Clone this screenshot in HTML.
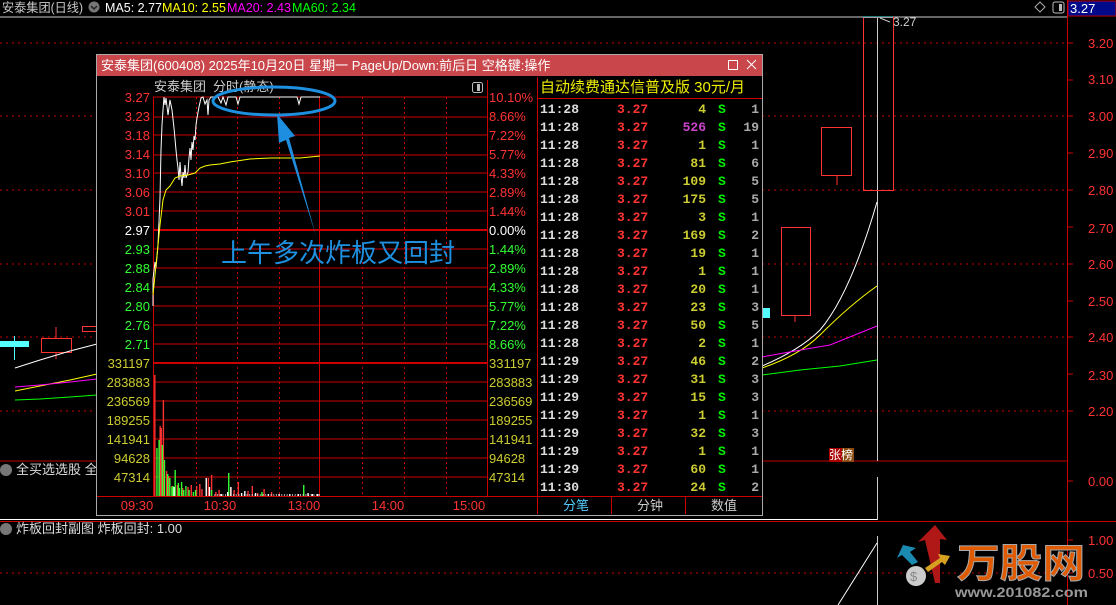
<!DOCTYPE html>
<html><head><meta charset="utf-8"><style>
html,body{margin:0;padding:0;background:#000;width:1116px;height:605px;overflow:hidden}
svg{display:block;font-family:"Liberation Sans","Noto Sans CJK SC",sans-serif}
.m{font-family:"Liberation Mono","DejaVu Sans Mono",monospace;font-weight:bold}
</style></head><body>
<svg width="1116" height="605" viewBox="0 0 1116 605" font-size="12">
<!-- top header -->
<text x="2" y="12" fill="#c8c8c8" font-size="12.5" textLength="81" lengthAdjust="spacingAndGlyphs">安泰集团(日线)</text>
<circle cx="94" cy="7" r="5.5" fill="#777"/><path d="M91 6l3 3 3-3" stroke="#222" stroke-width="1.5" fill="none"/>
<text x="105" y="12" fill="#fff" font-size="12.5">MA5: 2.77</text>
<text x="162" y="12" fill="#ff0" font-size="12.5">MA10: 2.55</text>
<text x="227" y="12" fill="#f0f" font-size="12.5">MA20: 2.43</text>
<text x="292" y="12" fill="#0f0" font-size="12.5">MA60: 2.34</text>
<path d="M1040 2l5 5-5 5-5-5z" stroke="#aaa" fill="none"/>
<rect x="1053" y="2" width="11" height="11" rx="2" stroke="#bbb" fill="none"/><rect x="1059" y="4" width="3" height="7" fill="#bbb"/>
<rect x="1068" y="1" width="48" height="15" fill="#000a8a" stroke="#b00"/>
<text x="1070" y="13" fill="#fff" font-size="13">3.27</text>
<line x1="0" y1="17" x2="1067" y2="17" stroke="#ccc"/>
<!-- right axis -->
<line x1="1067.5" y1="0" x2="1067.5" y2="605" stroke="#c00"/>
<g fill="#f33" font-size="13">
<text x="1088" y="48">3.20</text><text x="1088" y="84">3.10</text><text x="1088" y="121">3.00</text><text x="1088" y="158">2.90</text><text x="1088" y="195">2.80</text><text x="1088" y="233">2.70</text><text x="1088" y="269">2.60</text><text x="1088" y="306">2.50</text><text x="1088" y="342">2.40</text><text x="1088" y="380">2.30</text><text x="1088" y="416">2.20</text><text x="1088" y="486">0.00</text><text x="1088" y="545">1.00</text><text x="1088" y="578">0.50</text>
</g>
<g stroke="#c00">
<path d="M1068 43h5M1068 80h5M1068 116h5M1068 153h5M1068 190h5M1068 227h5M1068 264h5M1068 301h5M1068 337h5M1068 374h5M1068 411h5M1068 481h5M1068 540h5M1068 573h5"/>
</g>
<g stroke="#c00" stroke-dasharray="2 4">
<path d="M0 43h1067M0 116h1067M0 190h1067M0 264h1067M0 337h1067M0 411h1067M0 573h1067"/>
</g>
<line x1="0" y1="461" x2="1067" y2="461" stroke="#b00"/>
<line x1="0" y1="519.5" x2="877" y2="519.5" stroke="#fff"/>
<line x1="0" y1="521.5" x2="1116" y2="521.5" stroke="#c00"/>
<!-- labels -->
<circle cx="6" cy="470" r="6" fill="#777"/><text x="16" y="474" fill="#ddd" font-size="13">全买选选股 全</text>
<circle cx="6" cy="529" r="6" fill="#777"/><text x="16" y="533" fill="#ddd" font-size="13">炸板回封副图 炸板回封: 1.00</text>
<!-- left candles -->
<rect x="0" y="341" width="29" height="6" fill="#5ff"/><line x1="14.5" y1="336" x2="14.5" y2="360" stroke="#5ff"/>
<rect x="41.5" y="338.5" width="30" height="14" stroke="#f33" fill="none"/><line x1="56" y1="327" x2="56" y2="338" stroke="#f33"/><line x1="56" y1="353" x2="56" y2="359" stroke="#f33"/>
<rect x="82.5" y="326.5" width="15" height="5" stroke="#f33" fill="none"/>
<polyline points="15,368 40,360 70,351 97,344" stroke="#fff" fill="none"/>
<polyline points="15,391 40,386 70,380 97,374" stroke="#ff0" fill="none"/>
<polyline points="15,387 40,385 70,382 97,379" stroke="#f0f" fill="none"/>
<polyline points="15,400 40,399 70,397 97,395" stroke="#0f0" fill="none"/>
<!-- right candles -->
<line x1="877.5" y1="17" x2="877.5" y2="461" stroke="#ccc"/><line x1="877.5" y1="477" x2="877.5" y2="520" stroke="#ccc"/><line x1="877.5" y1="536" x2="877.5" y2="605" stroke="#ccc"/>
<rect x="762" y="308" width="8" height="10" fill="#5ff"/>
<rect x="781.5" y="227.5" width="29" height="88" stroke="#f33" fill="none"/><line x1="795" y1="316" x2="795" y2="322" stroke="#f33"/>
<rect x="821.5" y="127.5" width="30" height="48" stroke="#f33" fill="none"/><line x1="837" y1="176" x2="837" y2="185" stroke="#f33"/>
<rect x="863.5" y="17.5" width="30" height="173" stroke="#f33" fill="none"/>
<line x1="863" y1="17" x2="893" y2="17" stroke="#5ff"/>
<path d="M880 18l10 4" stroke="#ccc"/><text x="893" y="26" fill="#ccc" font-size="12">3.27</text>
<path d="M762 366 Q800 350 820 330 Q850 295 877 202" stroke="#fff" fill="none"/>
<path d="M762 368 Q800 355 820 335 Q850 305 877 286" stroke="#ff0" fill="none"/>
<path d="M762 357 Q800 350 830 345 L877 326" stroke="#f0f" fill="none"/>
<path d="M762 375 L800 370 L840 366 L877 360" stroke="#0f0" fill="none"/>
<rect x="829" y="448" width="13" height="14" fill="#a00"/><rect x="842" y="448" width="12" height="14" fill="#8a4a10"/>
<text x="829" y="459" fill="#fff" font-size="12">张榜</text>
<line x1="838" y1="605" x2="877" y2="543" stroke="#fff"/>
<!-- logo -->
<path d="M935 583 L925 540 L918 542 L935 525 L947 540 L940 539 L940 583z" fill="#b01818"/>
<path d="M912 565 L902 555 L897 558 L903 545 L916 548 L910 552 L918 562z" fill="#1a8ab0"/>
<path d="M925 568 L940 558 L938 554 L950 556 L945 565 L942 562 L928 572z" fill="#d8a020"/>
<circle cx="916" cy="576" r="10" fill="#ccc"/><text x="910" y="581" fill="#888" font-size="13">$</text>
<text x="957" y="577" fill="#e05a00" stroke="#aaa" stroke-width="1" font-size="40" font-weight="bold" textLength="128" lengthAdjust="spacingAndGlyphs">万股网</text>
<text x="955" y="597" fill="#999" font-size="14" font-weight="bold" textLength="133" lengthAdjust="spacingAndGlyphs">www.201082.com</text>

<!-- popup -->
<rect x="96.5" y="54.5" width="666" height="461" fill="#000" stroke="#aaa"/>
<rect x="97" y="55" width="665" height="21" fill="#c9464b"/>
<text x="101" y="70" fill="#fff" font-size="13">安泰集团(600408) 2025年10月20日 星期一 PageUp/Down:前后日 空格键:操作</text>
<rect x="728.5" y="60.5" width="9" height="9" stroke="#fff" fill="none"/>
<path d="M747 60l9 9M756 60l-9 9" stroke="#fff"/>
<text x="154" y="91" fill="#ccc" font-size="13">安泰集团</text>
<text x="213" y="91" fill="#ccc" font-size="13">分时(静态)</text>
<rect x="472.5" y="82.5" width="10" height="10" rx="2" stroke="#bbb" fill="none"/><rect x="477" y="84" width="3" height="7" fill="#bbb"/>
<!-- grid -->
<g stroke="#c00">
<path d="M153 97h334M153 117h334M153 135h334M153 155h334M153 173h334M153 192h334M153 211h334M153 249h334M153 268h334M153 287h334M153 306h334M153 325h334M153 344h334M153 382h334M153 401h334M153 420h334M153 439h334M153 458h334M153 477h334"/>
<path d="M153.5 97v399M319.5 97v399M487.5 80v416M537.5 77v437" />
</g>
<path d="M153 230h334M153 363h334" stroke="#c00" stroke-width="2"/>
<path d="M97 496.5h665" stroke="#c00"/>
<g stroke="#c00" stroke-dasharray="2 3">
<path d="M196.5 97v399M237.5 97v399M279.5 97v399M362.5 97v399M404.5 97v399M446.5 97v399"/>
</g>
<g font-size="13" text-anchor="end">
<g fill="#f33"><text x="150" y="102">3.27</text><text x="150" y="121">3.23</text><text x="150" y="140">3.18</text><text x="150" y="159">3.14</text><text x="150" y="178">3.10</text><text x="150" y="197">3.06</text><text x="150" y="216">3.01</text></g>
<text x="150" y="235" fill="#fff">2.97</text>
<g fill="#3f3"><text x="150" y="254">2.93</text><text x="150" y="273">2.88</text><text x="150" y="292">2.84</text><text x="150" y="311">2.80</text><text x="150" y="330">2.76</text><text x="150" y="349">2.71</text></g>
<g fill="#cc3"><text x="150" y="368">331197</text><text x="150" y="387">283883</text><text x="150" y="406">236569</text><text x="150" y="425">189255</text><text x="150" y="444">141941</text><text x="150" y="463">94628</text><text x="150" y="482">47314</text></g>
</g>
<g font-size="13">
<g fill="#f33"><text x="489" y="102">10.10%</text><text x="489" y="121">8.66%</text><text x="489" y="140">7.22%</text><text x="489" y="159">5.77%</text><text x="489" y="178">4.33%</text><text x="489" y="197">2.89%</text><text x="489" y="216">1.44%</text></g>
<text x="489" y="235" fill="#fff">0.00%</text>
<g fill="#3f3"><text x="489" y="254">1.44%</text><text x="489" y="273">2.89%</text><text x="489" y="292">4.33%</text><text x="489" y="311">5.77%</text><text x="489" y="330">7.22%</text><text x="489" y="349">8.66%</text></g>
<g fill="#cc3"><text x="489" y="368">331197</text><text x="489" y="387">283883</text><text x="489" y="406">236569</text><text x="489" y="425">189255</text><text x="489" y="444">141941</text><text x="489" y="463">94628</text><text x="489" y="482">47314</text></g>
</g>
<g fill="#f33" font-size="13" text-anchor="middle"><text x="137" y="510">09:30</text><text x="220" y="510">10:30</text><text x="304" y="510">13:00</text><text x="388" y="510">14:00</text><text x="469" y="510">15:00</text></g>
<!-- price line -->
<polyline fill="none" stroke="#fff" points="153,306 153,279 155,262 156,268 158,245 160,198 161,150 162,125 163,110 164,97 165,105 166,98 168,115 170,100 172,110 174,128 176,150 177,160 178,168 179,180 180,162 181,176 182,186 183,172 184,178 185,165 186,178 188,172 189,158 190,148 191,160 192,142 193,150 194,136 195,140 196,125 197,118 199,107 201,98 203,97 205,104 207,100 208,115 209,100 211,97 218,97 221,103 223,97 226,105 228,97 236,97 238,104 240,97 297,97 299,104 301,97 320,97"/>
<polyline fill="none" stroke="#ff0" points="153,295 154,285 156,265 158,245 160,225 163,200 166,190 170,186 175,178 180,176 188,175 195,173 200,168 205,166 210,165 220,164 230,162 250,159 270,158 300,158 310,157 320,156"/>
<!-- volume -->
<g stroke-width="1.3" transform="matrix(1.0714 0 0 1 0 0)">
<path stroke="#f33" d="M144.5 496V375M149.5 496V426M150.5 496V428M152.5 496V400M155.5 496V471M157.5 496V476M160.5 496V486M165.5 496V485M170.5 496V488M175.5 496V487M178.5 496V485M183.5 496V486M186.5 496V484M188.5 496V489M194.5 496V478M197.5 496V475M201.5 496V492M204.5 496V490M215.5 496V487M218.5 496V490M222.5 496V482M231.5 496V491M235.5 496V486M240.5 496V493M246.5 496V489M253.5 496V492M283.5 496V491"/>
<path stroke="#3f3" d="M146.5 496V448M148.5 496V440M151.5 496V445M153.5 496V460M156.5 496V474M158.5 496V478M160.5 496V487M161.5 496V486M163.5 496V470M166.5 496V483M167.5 496V488M169.5 496V482M171.5 496V490M173.5 496V486M176.5 496V490M180.5 496V492M182.5 496V490M197.5 496V490M213.5 496V473M244.5 496V492M283.5 496V485"/>
<path stroke="#fff" d="M162.5 496V487M192.5 496V478M195.5 496V487M206.5 496V494M212.5 496V492M215.5 496V487M225.5 496V493M228.5 496V491M238.5 496V493M250.5 496V494M260.5 496V494M270.5 496V494M278.5 496V494M287.5 496V493M291.5 496V494M296.5 496V494"/>
<path stroke="#fff" d="M200 495h100" stroke-dasharray="1 1.5"/>
</g>
<!-- table -->
<text x="540" y="92" fill="#ee0" font-size="15">自动续费通达信普及版  30元/月</text>
<line x1="537" y1="98.5" x2="762" y2="98.5" stroke="#c00"/>
<g class="m" font-size="13">
<g fill="#ddd"><text x="540" y="113">11:28</text><text x="540" y="131">11:28</text><text x="540" y="149">11:28</text><text x="540" y="167">11:28</text><text x="540" y="185">11:28</text><text x="540" y="203">11:28</text><text x="540" y="221">11:28</text><text x="540" y="239">11:28</text><text x="540" y="257">11:28</text><text x="540" y="275">11:28</text><text x="540" y="293">11:28</text><text x="540" y="311">11:28</text><text x="540" y="329">11:28</text><text x="540" y="347">11:28</text><text x="540" y="365">11:29</text><text x="540" y="383">11:29</text><text x="540" y="401">11:29</text><text x="540" y="419">11:29</text><text x="540" y="437">11:29</text><text x="540" y="455">11:29</text><text x="540" y="473">11:29</text><text x="540" y="491">11:30</text></g>
<g fill="#f33"><text x="617" y="113">3.27</text><text x="617" y="131">3.27</text><text x="617" y="149">3.27</text><text x="617" y="167">3.27</text><text x="617" y="185">3.27</text><text x="617" y="203">3.27</text><text x="617" y="221">3.27</text><text x="617" y="239">3.27</text><text x="617" y="257">3.27</text><text x="617" y="275">3.27</text><text x="617" y="293">3.27</text><text x="617" y="311">3.27</text><text x="617" y="329">3.27</text><text x="617" y="347">3.27</text><text x="617" y="365">3.27</text><text x="617" y="383">3.27</text><text x="617" y="401">3.27</text><text x="617" y="419">3.27</text><text x="617" y="437">3.27</text><text x="617" y="455">3.27</text><text x="617" y="473">3.27</text><text x="617" y="491">3.27</text></g>
<g fill="#cc3" text-anchor="end"><text x="706" y="113">4</text><text x="706" y="131" fill="#c4c">526</text><text x="706" y="149">1</text><text x="706" y="167">81</text><text x="706" y="185">109</text><text x="706" y="203">175</text><text x="706" y="221">3</text><text x="706" y="239">169</text><text x="706" y="257">19</text><text x="706" y="275">1</text><text x="706" y="293">20</text><text x="706" y="311">23</text><text x="706" y="329">50</text><text x="706" y="347">2</text><text x="706" y="365">46</text><text x="706" y="383">31</text><text x="706" y="401">15</text><text x="706" y="419">1</text><text x="706" y="437">32</text><text x="706" y="455">1</text><text x="706" y="473">60</text><text x="706" y="491">24</text></g>
<g fill="#0e0"><text x="718" y="113">S</text><text x="718" y="131">S</text><text x="718" y="149">S</text><text x="718" y="167">S</text><text x="718" y="185">S</text><text x="718" y="203">S</text><text x="718" y="221">S</text><text x="718" y="239">S</text><text x="718" y="257">S</text><text x="718" y="275">S</text><text x="718" y="293">S</text><text x="718" y="311">S</text><text x="718" y="329">S</text><text x="718" y="347">S</text><text x="718" y="365">S</text><text x="718" y="383">S</text><text x="718" y="401">S</text><text x="718" y="419">S</text><text x="718" y="437">S</text><text x="718" y="455">S</text><text x="718" y="473">S</text><text x="718" y="491">S</text></g>
<g fill="#aaa" text-anchor="end"><text x="759" y="113">1</text><text x="759" y="131">19</text><text x="759" y="149">1</text><text x="759" y="167">6</text><text x="759" y="185">5</text><text x="759" y="203">5</text><text x="759" y="221">1</text><text x="759" y="239">2</text><text x="759" y="257">1</text><text x="759" y="275">1</text><text x="759" y="293">1</text><text x="759" y="311">3</text><text x="759" y="329">5</text><text x="759" y="347">1</text><text x="759" y="365">2</text><text x="759" y="383">3</text><text x="759" y="401">3</text><text x="759" y="419">1</text><text x="759" y="437">3</text><text x="759" y="455">1</text><text x="759" y="473">1</text><text x="759" y="491">2</text></g>
</g>
<path d="M611.5 497v17M685.5 497v17" stroke="#c00"/>
<text x="563" y="510" fill="#5cf" font-size="13">分笔</text>
<text x="637" y="510" fill="#ccc" font-size="13">分钟</text>
<text x="711" y="510" fill="#ccc" font-size="13">数值</text>
<!-- annotation -->
<ellipse cx="274" cy="101" rx="61" ry="14" stroke="#1e90e0" stroke-width="3" fill="none"/>
<path d="M316 236 L286 140 L279 143 L277 114 L295 136 L289 138 Z" fill="#1e8fe0"/>
<text x="221" y="262" fill="#1e90e0" font-size="26">上午多次炸板又回封</text>
</svg>
</body></html>
